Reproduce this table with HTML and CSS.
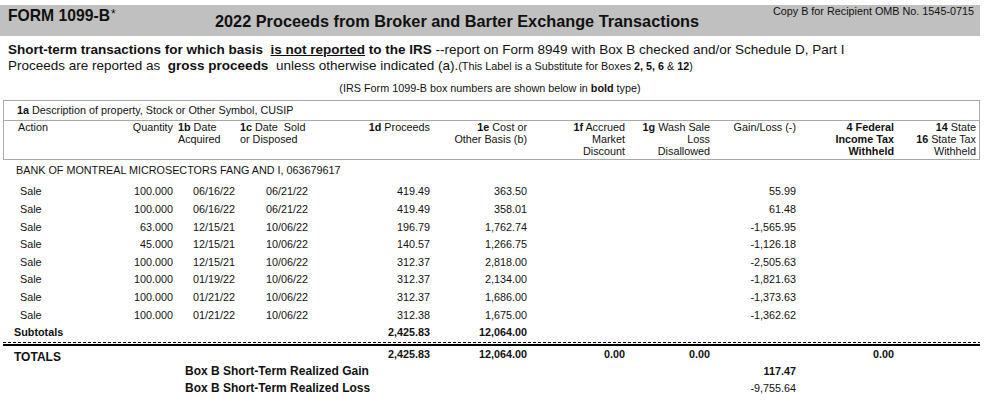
FILE: index.html
```html
<!DOCTYPE html>
<html>
<head>
<meta charset="utf-8">
<link rel="stylesheet" href="styles.css">
</head>
<body>
<div class="page">
  <div class="band">
    <div class="form">FORM 1099-B<span class="ast">*</span></div>
    <div class="title">2022 Proceeds from Broker and Barter Exchange Transactions</div>
    <div class="copy">Copy B for Recipient OMB No. 1545-0715</div>
  </div>
  <div class="intro">
    <p class="l1"><b>Short-term transactions for which basis&nbsp; <u>is not reported</u> to the IRS</b> --report on Form 8949 with Box B checked and/or Schedule D, Part I</p>
    <p class="l2">Proceeds are reported as&nbsp; <b>gross proceeds</b>&nbsp; unless otherwise indicated (a).<span class="sub">(This Label is a Substitute for Boxes <b>2, 5, 6</b> &amp; <b>12</b>)</span></p>
  </div>
  <p class="note">(IRS Form 1099-B box numbers are shown below in <b>bold</b> type)</p>
  <div class="tbl">
    <div class="box">
      <div class="desc"><b>1a</b> Description of property, Stock or Other Symbol, CUSIP</div>
      <div class="cols head">
        <div class="h-act">Action</div>
        <div class="r">Quantity</div>
        <div class="h-d"><b>1b</b> Date<br>Acquired</div>
        <div class="h-d"><b>1c</b> Date&nbsp; Sold<br>or Disposed</div>
        <div class="r"><b>1d</b> Proceeds</div>
        <div class="r"><b>1e</b> Cost or<br>Other Basis (b)</div>
        <div class="r"><b>1f</b> Accrued<br>Market<br>Discount</div>
        <div class="r"><b>1g</b> Wash Sale<br>Loss<br>Disallowed</div>
        <div class="r">Gain/Loss (-)</div>
        <div class="r"><b>4 Federal<br>Income Tax<br>Withheld</b></div>
        <div class="r last"><b>14</b> State<br><b>16</b> State Tax<br>Withheld</div>
      </div>
    </div>
    <div class="security">BANK OF MONTREAL MICROSECTORS FANG AND I, 063679617</div>
    <div class="rows">
      <div class="cols row"><span class="act">Sale</span><span class="r">100.000</span><span class="d1">06/16/22</span><span class="d2">06/21/22</span><span class="r">419.49</span><span class="r">363.50</span><span></span><span></span><span class="r">55.99</span><span></span><span></span></div>
      <div class="cols row"><span class="act">Sale</span><span class="r">100.000</span><span class="d1">06/16/22</span><span class="d2">06/21/22</span><span class="r">419.49</span><span class="r">358.01</span><span></span><span></span><span class="r">61.48</span><span></span><span></span></div>
      <div class="cols row"><span class="act">Sale</span><span class="r">63.000</span><span class="d1">12/15/21</span><span class="d2">10/06/22</span><span class="r">196.79</span><span class="r">1,762.74</span><span></span><span></span><span class="r">-1,565.95</span><span></span><span></span></div>
      <div class="cols row"><span class="act">Sale</span><span class="r">45.000</span><span class="d1">12/15/21</span><span class="d2">10/06/22</span><span class="r">140.57</span><span class="r">1,266.75</span><span></span><span></span><span class="r">-1,126.18</span><span></span><span></span></div>
      <div class="cols row"><span class="act">Sale</span><span class="r">100.000</span><span class="d1">12/15/21</span><span class="d2">10/06/22</span><span class="r">312.37</span><span class="r">2,818.00</span><span></span><span></span><span class="r">-2,505.63</span><span></span><span></span></div>
      <div class="cols row"><span class="act">Sale</span><span class="r">100.000</span><span class="d1">01/19/22</span><span class="d2">10/06/22</span><span class="r">312.37</span><span class="r">2,134.00</span><span></span><span></span><span class="r">-1,821.63</span><span></span><span></span></div>
      <div class="cols row"><span class="act">Sale</span><span class="r">100.000</span><span class="d1">01/21/22</span><span class="d2">10/06/22</span><span class="r">312.37</span><span class="r">1,686.00</span><span></span><span></span><span class="r">-1,373.63</span><span></span><span></span></div>
      <div class="cols row"><span class="act">Sale</span><span class="r">100.000</span><span class="d1">01/21/22</span><span class="d2">10/06/22</span><span class="r">312.38</span><span class="r">1,675.00</span><span></span><span></span><span class="r">-1,362.62</span><span></span><span></span></div>
      <div class="cols row subtotal"><span class="lbl span4">Subtotals</span><span class="r">2,425.83</span><span class="r">12,064.00</span><span></span><span></span><span></span><span></span><span></span></div>
    </div>
    <div class="dash"></div>
    <div class="thick"></div>
    <div class="cols trow totals"><span class="tlbl span4">TOTALS</span><span class="r">2,425.83</span><span class="r">12,064.00</span><span class="r">0.00</span><span class="r">0.00</span><span></span><span class="r">0.00</span><span></span></div>
    <div class="cols trow"><span class="blbl">Box B Short-Term Realized Gain</span><span class="r">117.47</span><span></span><span></span></div>
    <div class="cols trow"><span class="blbl">Box B Short-Term Realized Loss</span><span class="r normal">-9,755.64</span><span></span><span></span></div>
  </div>
</div>
</body>
</html>
```
FILE: styles.css
```css
* { box-sizing: border-box; }
body {
  margin: 0;
  font-family: "Liberation Sans", Arial, sans-serif;
  color: #111;
  background: #fff;
}
.page { width: 980px; padding-top: 5px; }

.band {
  height: 31px;
  background: #c0c0c0;
  display: flex;
  align-items: flex-start;
}
.form {
  flex: 0 0 215px;
  padding-left: 8px;
  margin-top: 2.5px;
  font-size: 15.7px;
  line-height: 16px;
  font-weight: bold;
  white-space: nowrap;
}
.ast {
  font-size: 12px;
  line-height: 12px;
  vertical-align: top;
  font-weight: normal;
  margin-left: 1px;
}
.title {
  margin-top: 7.8px;
  font-size: 16.3px;
  line-height: 17px;
  font-weight: bold;
  white-space: nowrap;
}
.copy {
  margin-left: auto;
  padding-right: 6px;
  margin-top: 0.5px;
  font-size: 10.8px;
  line-height: 11px;
  white-space: nowrap;
}

.intro { margin-top: 6px; padding-left: 8px; }
.intro p { margin: 0; font-size: 13.5px; line-height: 16px; white-space: nowrap; }
.sub { font-size: 10.8px; }

.note {
  margin: 7px 0 0;
  text-align: center;
  font-size: 10.8px;
  line-height: 14px;
}

.tbl { margin: 5px 0 0 3px; width: 977px; font-size: 10.8px; }

.box {
  height: 60px;
  box-shadow: inset 0 0 0 1px #a9a9a9;
}
.desc {
  height: 21px;
  line-height: 20px;
  padding-left: 14px;
  border-bottom: 1px solid #a9a9a9;
}

.cols {
  display: grid;
  grid-template-columns: 117px 55px 62px 103px 92px 97px 98px 85px 86px 98px 84px;
}
.cols .r { text-align: right; padding-right: 2px; white-space: nowrap; }
.cols .last { padding-right: 4px; }

.head { line-height: 12px; height: 38px; white-space: nowrap; }
.h-act { padding-left: 15px; }
.h-d { padding-left: 3px; }

.security {
  padding: 1px 0 4.4px 13px;
  line-height: 18px;
}

.row { line-height: 17.6px; }
.act { padding-left: 17px; }
.d1 { padding-left: 18px; }
.d2 { padding-left: 29px; }
.subtotal { font-weight: bold; }
.lbl { padding-left: 11px; }
.span4 { grid-column: 1 / 5; }

.dash {
  height: 1px;
  background: repeating-linear-gradient(to right, #000 0 3px, transparent 3px 5px);
}
.thick { height: 2px; margin-top: 1px; background: #000; }

.trow { height: 17px; line-height: 17px; font-weight: bold; }
.tlbl { font-size: 12px; padding: 3px 0 0 11px; }
.blbl { grid-column: 1 / 9; padding-left: 182px; font-size: 12px; white-space: nowrap; }
.normal { font-weight: normal; }
```
